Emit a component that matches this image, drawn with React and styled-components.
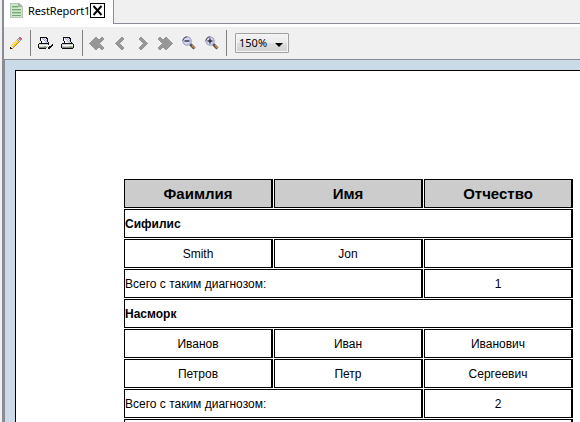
import React from "react";
import styled, { createGlobalStyle } from "styled-components";

const GlobalStyle = createGlobalStyle`
  * { box-sizing: border-box; }
  html, body { margin: 0; padding: 0; }
  body { overflow: hidden; background: #fff; font-family: "Noto Sans", sans-serif; color: #000; }
`;

const Window = styled.div`
  width: 580px;
  height: 422px;
  padding-left: 2px;
  background: #f0f0f0;
  overflow: hidden;
`;

const Frame = styled.div`
  height: 422px;
  border-left: 2px solid #898c95;
  display: flex;
  flex-direction: column;
`;

const TabStrip = styled.div`
  height: 24px;
  display: flex;
  flex: none;
`;

const Tab = styled.div`
  width: 110px;
  height: 24px;
  padding-left: 6px;
  display: flex;
  align-items: flex-start;
  background: #fff;
  border-right: 1px solid #898c95;
`;

const SheetDrawing = styled.svg`
  flex: none;
  margin-top: 3px;
  width: 13px;
  height: 15px;
`;

const TabTitle = styled.span`
  width: 62px;
  margin: 3px 0 0 5px;
  font-size: 11px;
  line-height: 16px;
  white-space: nowrap;
  letter-spacing: -0.12px;
`;

const CloseButton = styled.button`
  width: 15px;
  height: 15px;
  margin: 3px 0 0 0;
  padding: 0;
  flex: none;
  border: 1px solid #000;
  background: #fff;
  display: flex;
`;

const TabFiller = styled.div`
  flex: 1;
  background: #f0f0f0;
  border-bottom: 1px solid #898c95;
`;

const ToolbarGap = styled.div`
  height: 3px;
  flex: none;
  background: #fff;
`;

const Toolbar = styled.div`
  height: 32px;
  flex: none;
  display: flex;
  align-items: flex-start;
  background: #f0f0f0;
`;

const ToolButton = styled.button`
  width: ${(p) => p.$width}px;
  height: 32px;
  padding: 0 0 0 ${(p) => p.$inset || 0}px;
  border: 0;
  background: none;
  display: flex;
  flex: none;
  align-items: center;
  justify-content: flex-start;

  svg { flex: none; }
`;

const Divider = styled.div`
  width: 1px;
  height: 26px;
  margin-top: 3px;
  flex: none;
  background: #808080;
`;

const ZoomSelect = styled.button`
  width: 54px;
  height: 20px;
  margin: 6px 0 0 8px;
  padding: 0 5px 0 3px;
  display: flex;
  align-items: center;
  justify-content: space-between;
  border: 1px solid #a0a0a0;
  border-radius: 1px;
  background: linear-gradient(#f3f3f3 0%, #ebebeb 48%, #dedede 52%, #d2d2d2 100%);
  box-shadow: inset 0 0 0 1px #f5f5f5;
  font-family: "Noto Sans", sans-serif;
  font-size: 11px;
  line-height: 16px;
  color: #000;
`;

const DropArrow = styled.svg`
  margin-top: 4px;
  width: 8px;
  height: 4px;
`;

const Canvas = styled.div`
  flex: 1;
  min-height: 0;
  padding: 10px 0 0 10px;
  background: #cadbe7;
  border-left: 1px solid #898c95;
  border-top: 1px solid #898c95;
`;

const Paper = styled.div`
  height: 100%;
  padding: 108px 0 0 108px;
  background: #fff;
  border-left: 1px solid #000;
  border-top: 1px solid #000;
  overflow: hidden;
`;

const Report = styled.div`
  width: 449px;
  display: grid;
  grid-template-columns: repeat(3, 149px);
  grid-auto-rows: 29px;
  gap: 1px;
  font-family: "Liberation Sans", Arial, sans-serif;
  font-size: 12px;
`;

const Cell = styled.div`
  grid-column: span ${(p) => p.$span || 1};
  border: 1px solid #000;
  border-right-width: 2px;
  line-height: 28px;
  text-align: center;
  white-space: nowrap;
`;

const HeaderCell = styled(Cell)`
  background: #ccc;
  font-size: 15px;
  font-weight: bold;
  line-height: 27px;
`;

const GroupCell = styled(Cell)`
  text-align: left;
  font-weight: bold;
`;

const LabelCell = styled(Cell)`
  text-align: left;
`;

const palette = {
  k: "#111111", w: "#ffffff", g: "#cfcfcf", d: "#858585", b: "#a9abd2",
  n: "#6fc53b", y: "#f8cb35", o: "#c98a1f", r: "#dc6575", s: "#8793b4",
  e: "#e5e5f5", h: "#959595", c: "#989898", q: "#fff0a0",
};

function PixelIcon({ rows }) {
  return (
    <svg width={rows[0].length} height={rows.length} shapeRendering="crispEdges">
      {rows.flatMap((row, y) =>
        [...row].map((c, x) =>
          palette[c] ? <rect key={`${x}-${y}`} x={x} y={y} width="1" height="1" fill={palette[c]} /> : null
        )
      )}
    </svg>
  );
}

const PENCIL = [
  ".........rr.",
  "........srrr",
  ".......sesrr",
  "......yyses.",
  ".....yqyys..",
  "....yqyyo...",
  "...yqyyo....",
  "..yqyyo.....",
  ".yqyyo......",
  ".eyyo.......",
  "keeo........",
  "kko.........",
];

const PRINT_SETUP = [
  "..kkkkkkk......",
  "..kebebekk.....",
  "..kwebebek.....",
  "..kwwebebk.....",
  "...kwwebek.....",
  "...kwwwebek....",
  ".kkkkkkkkkk....",
  "kgggggggggk...k",
  "kwwwwwwwwww..kk",
  "kgggggnngg.kkk.",
  "kdddddddd.kkk..",
  ".kkkkkkk..kk...",
];

const PRINT = [
  "..kkkkkkk....",
  "..kebebekk...",
  "..kwebebek...",
  "..kwwebebk...",
  "...kwwebek...",
  "...kwwwebek..",
  ".kkkkkkkkkkk.",
  "kgggggggggggk",
  "kwwwwwwwwwwwk",
  "kggggggggnngk",
  "kdddddddddddk",
  ".kkkkkkkkkkk.",
];

const SINGLE = [
  "......hh..",
  ".....hcch.",
  "....hccch.",
  "...hccch..",
  "..hccch...",
  ".hccch....",
  "hccch.....",
  ".hccch....",
  "..hccch...",
  "...hccch..",
  "....hccch.",
  ".....hcch.",
  "......hh..",
];

const DOUBLE = [
  "......hh....hh..",
  ".....hcch..hcch.",
  "....hccchhhccch.",
  "...hccchhhccch..",
  "..hccchhhccch...",
  ".hccchhhccch....",
  "hccchhhccch.....",
  ".hccchhhccch....",
  "..hccchhhccch...",
  "...hccchhhccch..",
  "....hccchhhccch.",
  ".....hcch..hcch.",
  "......hh....hh..",
];

const mirror = (rows) => rows.map((row) => [...row].reverse().join(""));

function Magnifier({ plus }) {
  return (
    <svg width="14" height="14" viewBox="0 0 14 14">
      <path d="M8.3 8.3 L12.5 12.5" stroke="#4e4e4e" strokeWidth="3" />
      <path d="M9.8 9.3 L12.8 12.3" stroke="#cf8a52" strokeWidth="1.4" />
      <circle cx="5" cy="5" r="4.2" fill="#d3d3f2" stroke="#9494b4" />
      <path d="M.9 4.6 A4.2 4.2 0 0 1 5 .8" fill="none" stroke="#555560" />
      <path d="M2.5 5 H7.5" stroke="#20202c" strokeWidth="1.3" />
      {plus && <path d="M5 2.5 V7.5" stroke="#20202c" strokeWidth="1.3" />}
    </svg>
  );
}

function SheetIcon() {
  return (
    <SheetDrawing viewBox="0 0 13 15" shapeRendering="crispEdges">
      <path d="M0 0H9L13 4V15H0Z" fill="#b9c4b9" />
      <path d="M1 1H8L12 5V14H1Z" fill="#cfe8cc" />
      <path d="M8 0V4H12Z" fill="#a5b1a5" />
      <path d="M2 3.5H8M2 6.5H11M2 9.5H11M2 12.5H11" stroke="#75a67b" />
      <path d="M2 4.5H8M2 7.5H11M2 10.5H11" stroke="#a9d2a9" />
    </SheetDrawing>
  );
}

export default function App() {
  return (
    <Window>
      <GlobalStyle />
      <Frame>
        <TabStrip>
          <Tab>
            <SheetIcon />
            <TabTitle>RestReport1</TabTitle>
            <CloseButton>
              <svg width="13" height="13">
                <path d="M2.5 2 L10.5 11 M10.5 2 L2.5 11" stroke="#000" strokeWidth="1.9" />
              </svg>
            </CloseButton>
          </Tab>
          <TabFiller />
        </TabStrip>
        <ToolbarGap />
        <Toolbar>
          <ToolButton $width={26} $inset={6}><PixelIcon rows={PENCIL} /></ToolButton>
          <Divider />
          <ToolButton $width={30} $inset={7}><PixelIcon rows={PRINT_SETUP} /></ToolButton>
          <ToolButton $width={21} $inset={0}><PixelIcon rows={PRINT} /></ToolButton>
          <Divider />
          <ToolButton $width={29} $inset={6}><PixelIcon rows={DOUBLE} /></ToolButton>
          <ToolButton $width={21} $inset={3}><PixelIcon rows={SINGLE} /></ToolButton>
          <ToolButton $width={21} $inset={5}><PixelIcon rows={mirror(SINGLE)} /></ToolButton>
          <ToolButton $width={25} $inset={3}><PixelIcon rows={mirror(DOUBLE)} /></ToolButton>
          <ToolButton $width={22} $inset={3}><Magnifier /></ToolButton>
          <ToolButton $width={25} $inset={4}><Magnifier plus /></ToolButton>
          <Divider />
          <ZoomSelect>
            150%
            <DropArrow><path d="M0 0H8L4 4Z" /></DropArrow>
          </ZoomSelect>
        </Toolbar>
        <Canvas>
          <Paper>
            <Report>
              <HeaderCell>Фаимлия</HeaderCell>
              <HeaderCell>Имя</HeaderCell>
              <HeaderCell>Отчество</HeaderCell>
              <GroupCell $span={3}>Сифилис</GroupCell>
              <Cell>Smith</Cell>
              <Cell>Jon</Cell>
              <Cell />
              <LabelCell $span={2}>Всего с таким диагнозом:</LabelCell>
              <Cell>1</Cell>
              <GroupCell $span={3}>Насморк</GroupCell>
              <Cell>Иванов</Cell>
              <Cell>Иван</Cell>
              <Cell>Иванович</Cell>
              <Cell>Петров</Cell>
              <Cell>Петр</Cell>
              <Cell>Сергеевич</Cell>
              <LabelCell $span={2}>Всего с таким диагнозом:</LabelCell>
              <Cell>2</Cell>
              <GroupCell $span={3} />
            </Report>
          </Paper>
        </Canvas>
      </Frame>
    </Window>
  );
}
